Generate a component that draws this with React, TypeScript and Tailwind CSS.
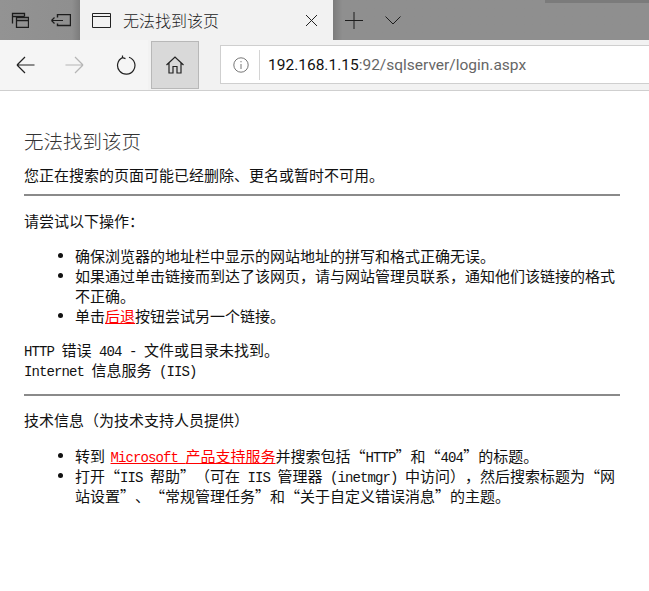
import React from "react";

const M = ({ children }: { children: React.ReactNode }) => (
  <span className="font-['Liberation_Mono',monospace] text-[14px] tracking-[-0.9px] leading-[0]">{children}</span>
);

const I = ({ children, className, w, h }: { children: React.ReactNode; className?: string; w: number; h: number }) => (
  <svg width={w} height={h} viewBox={`0 0 ${w} ${h}`} fill="none" stroke="currentColor" strokeWidth="1" className={className}>
    {children}
  </svg>
);

const Li = ({ children }: { children: React.ReactNode }) => (
  <li className="flex">
    <span className="shrink-0 w-[5px] h-[5px] rounded-full bg-[#111] mt-[7px] ml-[-17px] mr-3" />
    <div className="flex-1">{children}</div>
  </li>
);

export default function App() {
  return (
    <div lang="zh-CN" className="w-[649px] h-[591px] bg-white overflow-hidden font-['Noto_Sans_CJK_SC',sans-serif] text-[15px] leading-[20px] text-[#111] [text-spacing-trim:space-all]">
      <div className="flex h-10 bg-[#8f8f8f]">
        <div className="w-20 flex items-center bg-gradient-to-r from-[#939393] via-[#8f8f8f] via-90% to-[#7c7c7c] text-[#1c1c1c]">
          <I w={18} h={16} className="ml-[11px]">
            <path d="M1.5 11.5V1.5H13.5V4.5M1.5 4.5H13.5" strokeWidth="1.3" />
            <path d="M5.5 5.5H17.5V15.5H5.5ZM5.5 8.5H17.5" strokeWidth="1.3" />
          </I>
          <I w={20} h={13} className="ml-[22px]">
            <path d="M0.5 6.5H12M0.5 6.5L3.5 3.5M0.5 6.5L3.5 9.5" strokeWidth="1.2" />
            <path d="M6.5 3.5V0.5H19.5V11.5H6.5V9.5" strokeWidth="1.4" />
          </I>
        </div>
        <div className="w-[253px] flex items-center bg-[#f2f2f2] text-[#222]">
          <I w={19} h={15} className="ml-3">
            <path d="M0.5 0.5H18.5V14.5H0.5ZM0.5 3.5H18.5" />
          </I>
          <span className="ml-3 text-[16px] font-light">无法找到该页</span>
          <I w={13} h={13} className="ml-[86px]">
            <path d="M1 1L12 12M12 1L1 12" />
          </I>
        </div>
        <div className="relative flex-1 flex items-center text-[#1c1c1c] bg-gradient-to-r from-[#7c7c7c] via-[#8f8f8f] via-[3%] to-[#8f8f8f]">
          <div className="absolute top-0 right-0 w-[104px] h-[3px] bg-[#7b7b7b]" />
          <I w={18} h={17} className="ml-3">
            <path d="M0 8.5H18M9 0V17" />
          </I>
          <I w={16} h={9} className="ml-[22px]">
            <path d="M0.5 0.5L8 8L15.5 0.5" />
          </I>
        </div>
      </div>
      <div className="flex h-[51px] bg-[#f2f2f2] border-b border-[#cfcfcf]">
        <div className="w-[148px] flex items-center text-[#222] bg-[#f5f5f5]">
          <I w={19} h={18} className="ml-4">
            <path d="M18.5 9H1M1 9L9 1M1 9L9 17" strokeWidth="1.2" />
          </I>
          <I w={19} h={18} className="ml-[30px] text-[#b5b5b5]">
            <path d="M0.5 9H18M18 9L10 1M18 9L10 17" strokeWidth="1.2" />
          </I>
          <I w={20} h={20} className="ml-[32px]">
            <path d="M6.5 2.6A8.7 8.7 0 1 0 13 2.2M6.5 2.6V0.5M6.5 2.6L9.5 3.6" strokeWidth="1.2" />
          </I>
        </div>
        <div className="w-12 h-12 mt-px ml-[3px] flex items-center justify-center bg-[#d9d9d9] border border-[#b8b8b8] text-[#222]">
          <I w={18} h={18}>
            <path d="M0.5 9L9 1L17.5 9M3 7V17H7V10.5H11V17H15V7" strokeWidth="1.2" />
          </I>
        </div>
        <div className="flex-1 ml-[21px] mt-[5px] h-[39px] flex items-center bg-white border border-r-0 border-[#cfcfcf]">
          <I w={16} h={16} className="ml-3 text-[#777]">
            <circle cx="8" cy="8" r="7.2" />
            <path d="M8 7V12M8 4V5.3" />
          </I>
          <div className="ml-[10px] w-px h-[30px] bg-[#d4d4d4]" />
          <span className="ml-2 font-['Roboto',sans-serif] text-[15.5px] text-[#666] whitespace-nowrap">
            <span className="text-[#111]">192.168.1.15</span>:92/sqlserver/login.aspx
          </span>
        </div>
      </div>
      <div className="pt-[38px] pl-6 w-[620px]">
        <h1 className="text-[19.5px] leading-6 font-light text-[#333]">无法找到该页</h1>
        <p className="mt-3">您正在搜索的页面可能已经删除、更名或暂时不可用。</p>
        <hr className="mt-[9px] border-0 h-0.5 bg-[#8a8a8a]" />
        <p className="mt-[15px]">请尝试以下操作：</p>
        <ul className="mt-[15px] pl-[51px]">
          <Li>确保浏览器的地址栏中显示的网站地址的拼写和格式正确无误。</Li>
          <Li>如果通过单击链接而到达了该网页，请与网站管理员联系，通知他们该链接的格式不正确。</Li>
          <Li>
            单击<span className="text-[#f00] underline">后退</span>按钮尝试另一个链接。
          </Li>
        </ul>
        <p className="mt-[14px]">
          <M>HTTP </M>错误<M> 404 - </M>文件或目录未找到。
        </p>
        <p>
          <M>Internet </M>信息服务<M> (IIS)</M>
        </p>
        <hr className="mt-[14px] border-0 h-0.5 bg-[#8a8a8a]" />
        <p className="mt-[14px]">技术信息（为技术支持人员提供）</p>
        <ul className="mt-4 pl-[51px]">
          <Li>
            转到<M> </M>
            <span className="-ml-0.5 text-[#f00] underline">
              <M>Microsoft </M>产品支持服务
            </span>
            并搜索包括“<M>HTTP</M>”和“<M>404</M>”的标题。
          </Li>
          <Li>
            打开“<M>IIS </M>帮助”（可在<M> IIS </M>管理器<M> (inetmgr) </M>中访问），然后搜索标题为“网站设置”、“常规管理任务”和“关于自定义错误消息”的主题。
          </Li>
        </ul>
      </div>
    </div>
  );
}
